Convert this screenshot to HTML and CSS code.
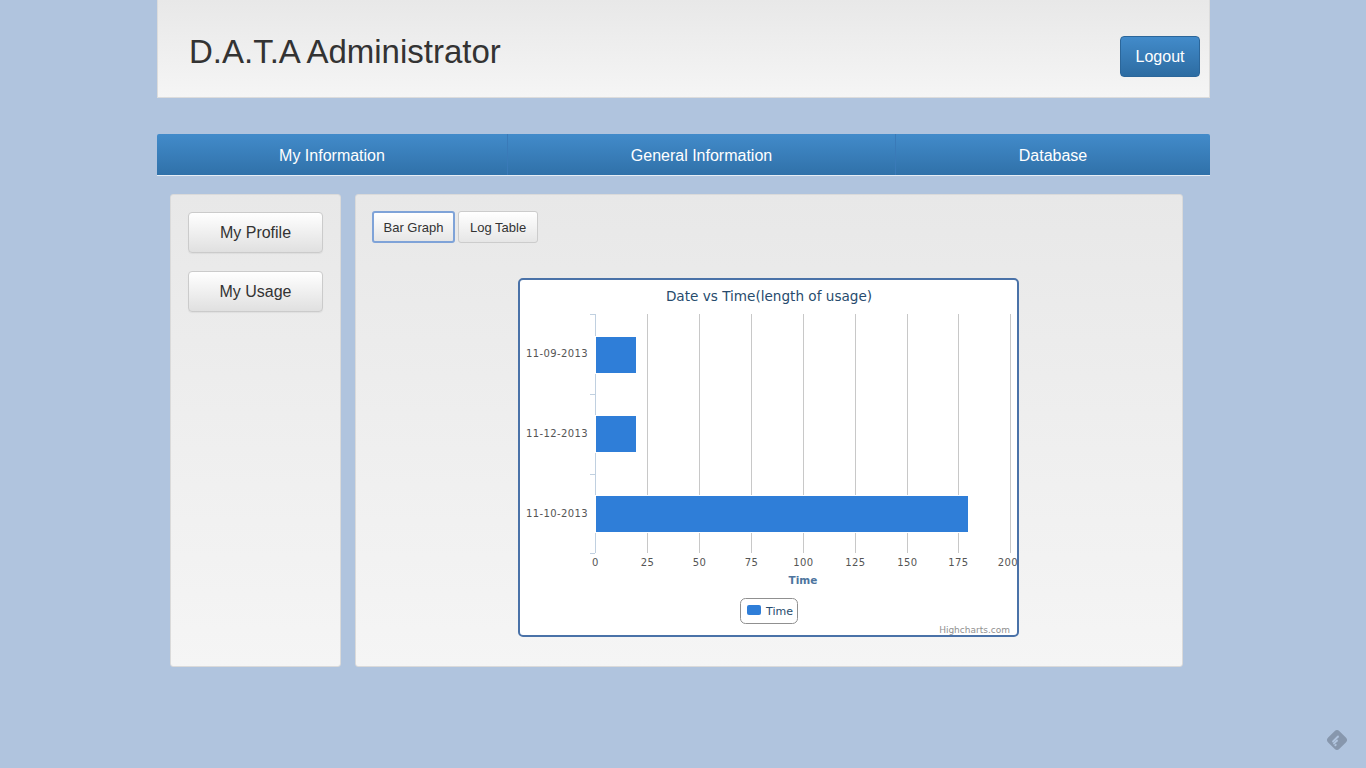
FILE: index.html
```html
<!DOCTYPE html>
<html lang="en">
<head>
<meta charset="utf-8">
<title>D.A.T.A Administrator</title>
<link rel="stylesheet" href="styles.css">
</head>
<body>
<div class="container">
  <header class="header">
    <h1 class="title">D.A.T.A Administrator</h1>
    <button class="btn-primary">Logout</button>
  </header>

  <nav class="nav">
    <a class="tab tab-1">My Information</a>
    <a class="tab tab-2">General Information</a>
    <a class="tab tab-3">Database</a>
  </nav>

  <div class="content">
    <aside class="side">
      <button class="side-btn">My Profile</button>
      <button class="side-btn">My Usage</button>
    </aside>
    <main class="main">
      <div class="toolbar">
        <button class="small-btn active">Bar Graph</button>
        <button class="small-btn">Log Table</button>
      </div>
      <div class="chart">
        <svg width="497" height="355" viewBox="0 0 497 355" class="chart-svg">
          <text x="249" y="21" class="c-title" text-anchor="middle">Date vs Time(length of usage)</text>
          <g class="grid">
            <line x1="127.5" y1="34" x2="127.5" y2="273"/>
            <line x1="179.5" y1="34" x2="179.5" y2="273"/>
            <line x1="231.5" y1="34" x2="231.5" y2="273"/>
            <line x1="283.5" y1="34" x2="283.5" y2="273"/>
            <line x1="335.5" y1="34" x2="335.5" y2="273"/>
            <line x1="387.5" y1="34" x2="387.5" y2="273"/>
            <line x1="438.5" y1="34" x2="438.5" y2="273"/>
            <line x1="490.5" y1="34" x2="490.5" y2="273"/>
          </g>
          <g class="yaxis">
            <line x1="75.5" y1="34" x2="75.5" y2="273"/>
            <line x1="70" y1="34.5" x2="75" y2="34.5"/>
            <line x1="70" y1="114.5" x2="75" y2="114.5"/>
            <line x1="70" y1="194.5" x2="75" y2="194.5"/>
            <line x1="70" y1="273.5" x2="75" y2="273.5"/>
          </g>
          <g class="bars">
            <rect x="75.5" y="56.5" width="41" height="37"/>
            <rect x="75.5" y="135.5" width="41" height="37"/>
            <rect x="75.5" y="215.5" width="373" height="37"/>
          </g>
          <g class="ylabels" text-anchor="end">
            <text x="68" y="77">11-09-2013</text>
            <text x="68" y="157">11-12-2013</text>
            <text x="68" y="237">11-10-2013</text>
          </g>
          <g class="xlabels" text-anchor="middle">
            <text x="75.5" y="286">0</text>
            <text x="127.5" y="286">25</text>
            <text x="179.5" y="286">50</text>
            <text x="231.5" y="286">75</text>
            <text x="283.5" y="286">100</text>
            <text x="335.5" y="286">125</text>
            <text x="387.5" y="286">150</text>
            <text x="438.5" y="286">175</text>
            <text x="488" y="286">200</text>
          </g>
          <text x="283" y="304" class="axis-title" text-anchor="middle">Time</text>
          <rect x="220.5" y="318.5" width="57" height="25" rx="5" class="legend-box"/>
          <rect x="227" y="325" width="14" height="10" rx="2" class="legend-sym"/>
          <text x="246" y="335" class="legend-text">Time</text>
          <text x="490" y="353" class="credits" text-anchor="end">Highcharts.com</text>
        </svg>
      </div>
    </main>
  </div>
</div>

<div class="feed-icon">
  <svg width="28" height="28" viewBox="0 0 28 28">
    <rect x="6" y="6" width="16" height="16" rx="3.5" transform="rotate(45 14 14)" fill="#8797ad"/>
    <g stroke="#b0c4de" stroke-width="1.8" stroke-linecap="round">
      <line x1="10" y1="15.5" x2="15" y2="10.5"/>
      <line x1="11" y1="17.5" x2="14" y2="14.5"/>
      <line x1="12.3" y1="19.3" x2="12.8" y2="18.8"/>
    </g>
  </svg>
</div>
</body>
</html>
```

FILE: styles.css
```css
* { box-sizing: border-box; }

html, body {
  margin: 0;
  padding: 0;
}

body {
  background: #b0c4de;
  font-family: "Liberation Sans", Arial, sans-serif;
  color: #333;
  height: 768px;
  overflow: hidden;
}

.container {
  width: 1053px;
  margin-left: 157px;
}

.header {
  height: 98px;
  background: linear-gradient(to bottom, #e8e8e8, #f5f5f5);
  border: 1px solid #dcdcdc;
  border-top: none;
  display: flex;
  align-items: flex-start;
  justify-content: space-between;
  padding: 0 9px 0 31px;
}

.title {
  margin: 34px 0 0 0;
  font-size: 33px;
  font-weight: normal;
  line-height: 36px;
  color: #333;
}

.btn-primary {
  margin-top: 36px;
  width: 80px;
  height: 41px;
  font-family: "Liberation Sans", Arial, sans-serif;
  font-size: 16px;
  color: #fff;
  background: linear-gradient(to bottom, #428bca, #2d6ca2);
  border: 1px solid #2b669a;
  border-radius: 4px;
  padding: 0;
}

.nav {
  margin-top: 36px;
  height: 42px;
  display: flex;
  border-bottom: 1px solid #e6edf5;
  border-radius: 2px 2px 0 0;
  overflow: hidden;
}

.tab {
  display: flex;
  align-items: center;
  justify-content: center;
  color: #fff;
  font-size: 16px;
  background: linear-gradient(to bottom, #428bca, #3071a9);
  padding-top: 3px;
}

.tab-1 { width: 351px; border-right: 1px solid #3a7ab8; }
.tab-2 { width: 388px; border-right: 1px solid #3a7ab8; }
.tab-3 { flex: 1; }

.content {
  display: flex;
  gap: 14px;
  margin-top: 18px;
  padding-left: 13px;
}

.side, .main {
  height: 473px;
  background: linear-gradient(to bottom, #e8e8e8, #f5f5f5);
  border: 1px solid #dadada;
  border-radius: 3px;
}

.side {
  width: 171px;
  padding: 17px 0 0 17px;
  display: flex;
  flex-direction: column;
  gap: 18px;
}

.side-btn {
  width: 135px;
  height: 41px;
  font-family: "Liberation Sans", Arial, sans-serif;
  font-size: 16px;
  color: #333;
  background: linear-gradient(to bottom, #ffffff, #e0e0e0);
  border: 1px solid #cbcbcb;
  border-radius: 4px;
  box-shadow: 0 1px 1px rgba(0,0,0,0.05);
  padding: 0;
}

.main {
  width: 828px;
  padding: 16px 0 0 16px;
}

.toolbar {
  display: flex;
  gap: 3px;
}

.small-btn {
  height: 32px;
  padding: 0 11px;
  font-family: "Liberation Sans", Arial, sans-serif;
  font-size: 13px;
  color: #333;
  white-space: nowrap;
  background: linear-gradient(to bottom, #ffffff, #e6e6e6);
  border: 1px solid #cccccc;
  border-radius: 3px;
}

.small-btn.active {
  border: 2px solid #7fa3d8;
  width: 83px;
  padding: 0;
}

.chart {
  width: 501px;
  height: 359px;
  margin: 35px 0 0 146px;
  background: #fff;
  border: 2px solid #4a72a8;
  border-radius: 5px;
}

.chart-svg {
  display: block;
  font-family: "DejaVu Sans", Verdana, sans-serif;
}

.c-title {
  font-size: 13.6px;
  fill: #274b6d;
}

.grid line {
  stroke: #c8c8c8;
  stroke-width: 1;
}

.yaxis line {
  stroke: #c0d0e0;
  stroke-width: 1;
}

.bars rect {
  fill: #2f7ed8;
  stroke: #ffffff;
  stroke-width: 1;
}

.ylabels text {
  font-size: 10px;
  letter-spacing: 0.4px;
  fill: #555;
}

.xlabels text {
  font-size: 10px;
  letter-spacing: 0.4px;
  fill: #555;
}

.axis-title {
  font-size: 10.5px;
  font-weight: bold;
  fill: #4d759e;
}

.legend-box {
  fill: #fff;
  stroke: #909090;
  stroke-width: 1;
}

.legend-sym {
  fill: #2f7ed8;
}

.legend-text {
  font-size: 11px;
  fill: #274b6d;
}

.credits {
  font-size: 9px;
  fill: #909090;
}

.feed-icon {
  position: fixed;
  left: 1323px;
  top: 726px;
  width: 28px;
  height: 28px;
}
```
